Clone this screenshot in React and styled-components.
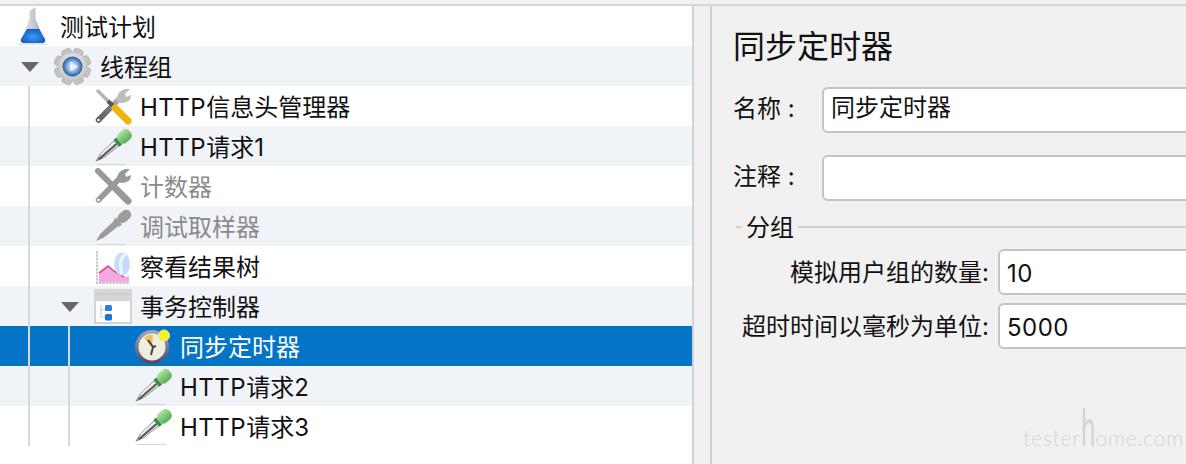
import styled, { createGlobalStyle } from "styled-components";

const GlobalStyle = createGlobalStyle`
  html, body {
    margin: 0;
    height: 100%;
    overflow: hidden;
    background: #f1f1f1;
  }
  * { box-sizing: border-box; }
`;

const FONT = `"Inter", "Noto Sans CJK SC", sans-serif`;

const Page = styled.div`
  position: relative;
  width: 1186px;
  height: 464px;
  overflow: hidden;
  display: flex;
  flex-direction: column;
  padding-top: 4px;
  background: #f1f1f1;
  font-family: ${FONT};
  color: #111;
`;

const Body = styled.div`
  flex: 1;
  display: flex;
  min-height: 0;
  border-top: 2px solid #d6d6d6;
`;

const TreePane = styled.div`
  width: 694px;
  flex: none;
  background: #fff;
  border-right: 2px solid #d2d2d2;
`;

const Splitter = styled.div`
  width: 18px;
  flex: none;
  background: #f1f1f1;
  border-right: 2px solid #cfcfcf;
`;

const Row = styled.div`
  height: 40px;
  display: flex;
  align-items: stretch;
  background: ${(p) => (p.$selected ? "#0374c6" : p.$striped ? "#f0f3f8" : "#fff")};
  color: ${(p) => (p.$selected ? "#fff" : p.$disabled ? "#8a8a8a" : "#111")};
`;

const Guide = styled.span`
  width: 40px;
  flex: none;
  &::before {
    content: "";
    display: block;
    width: 2px;
    height: 100%;
    margin-left: 28px;
    background: #d8d8d8;
  }
`;

const Toggle = styled.span`
  width: 40px;
  flex: none;
  display: flex;
  align-items: center;
  padding-left: 21px;
  &::before {
    content: "";
    display: ${(p) => (p.$open ? "block" : "none")};
    width: 0;
    height: 0;
    margin-top: 1px;
    border-left: 9px solid transparent;
    border-right: 9px solid transparent;
    border-top: 10px solid #666;
  }
`;

const IconSlot = styled.span`
  width: 60px;
  flex: none;
  padding-left: 14px;
  display: flex;
  svg {
    display: block;
    filter: blur(0.35px);
  }
`;

const Label = styled.span`
  font-size: 24px;
  line-height: 40px;
  white-space: nowrap;
  padding-top: 2px;
`;

const Latin = styled.span`
  letter-spacing: 0.5px;
`;

const Detail = styled.div`
  flex: 1;
  min-width: 0;
  padding: 19px 0 0 21px;
`;

const Title = styled.h1`
  margin: 0 0 18px;
  font-size: 32px;
  font-weight: 400;
  line-height: 44px;
  white-space: nowrap;
`;

const FieldRow = styled.div`
  display: flex;
  align-items: center;
  height: 46px;
  margin-bottom: 22px;
`;

const FieldLabel = styled.label`
  width: 89px;
  flex: none;
  padding-bottom: 8px;
  font-size: 24px;
  white-space: pre;
`;

const TextBox = styled.div`
  width: 500px;
  flex: none;
  height: 46px;
  padding-left: 7px;
  background: #fff;
  border: 2px solid #c4c4c4;
  border-radius: 6px;
  font-size: 24px;
  line-height: 38px;
  white-space: nowrap;
`;

const NumberBox = styled(TextBox)`
  line-height: 46px;
  letter-spacing: 0.5px;
`;

const Group = styled.div`
  margin-top: -11px;
  margin-left: 3px;
`;

const GroupTitle = styled.div`
  display: flex;
  align-items: center;
  gap: 4px;
  height: 30px;
  margin-bottom: 7px;
  font-size: 24px;
  &::before {
    content: "";
    width: 6px;
    height: 2px;
    background: #d2d2d2;
  }
  &::after {
    content: "";
    flex: 1;
    height: 2px;
    background: #d2d2d2;
  }
`;

const GroupText = styled.span`
  padding-bottom: 4px;
`;

const GroupField = styled.div`
  display: grid;
  grid-template-columns: 253px 1fr;
  column-gap: 9px;
  align-items: center;
  margin-bottom: 8px;
`;

const GroupLabel = styled.label`
  padding-bottom: 3px;
  font-size: 24px;
  text-align: right;
  white-space: nowrap;
`;

const Watermark = styled.div`
  position: absolute;
  right: 2px;
  bottom: 12px;
  font-family: "Lato", sans-serif;
  font-weight: 300;
  font-size: 21px;
  letter-spacing: 0.8px;
  color: #d4d4d4;
  line-height: 1;
  white-space: nowrap;
`;

const WatermarkTall = styled.span`
  display: inline-block;
  width: 15px;
  font-size: 52px;
  font-weight: 400;
  transform: scaleX(0.5);
  transform-origin: left bottom;
`;

const Flask = () => (
  <svg width="40" height="40" viewBox="0 0 40 40">
    <defs>
      <linearGradient id="flaskGlass" x1="0" y1="0" x2="1" y2="0">
        <stop offset="0" stopColor="#e4e6ea" />
        <stop offset="1" stopColor="#a9adb5" />
      </linearGradient>
      <radialGradient id="flaskLiquid" cx="0.5" cy="0.55" r="0.6">
        <stop offset="0" stopColor="#3f9cf5" />
        <stop offset="1" stopColor="#0f56bd" />
      </radialGradient>
    </defs>
    <path d="M15.5 5 L21.5 1 L21.5 13 L29 30 L9 30 L15.5 13 Z" fill="url(#flaskGlass)" />
    <path d="M13 23 L25 23 L31 33 Q32 37 28 37 L10 37 Q6 37 7 33 Z" fill="url(#flaskLiquid)" />
    <path d="M5 38 H33" stroke="#c9c9c9" strokeWidth="1" />
  </svg>
);

const GEAR_TEETH = [0, 45, 90, 135, 180, 225, 270, 315];

const Gear = () => (
  <svg width="40" height="40" viewBox="0 0 40 40">
    <defs>
      <radialGradient id="gearBody" cx="0.5" cy="0.4" r="0.6">
        <stop offset="0" stopColor="#f4f4f4" />
        <stop offset="1" stopColor="#c4c4c4" />
      </radialGradient>
      <radialGradient id="gearEye" cx="0.5" cy="0.5" r="0.5">
        <stop offset="0.4" stopColor="#a9c8ee" />
        <stop offset="1" stopColor="#24589f" />
      </radialGradient>
    </defs>
    {GEAR_TEETH.map((deg) => (
      <rect key={deg} x="13.5" y="2" width="10" height="9" rx="3" fill="#c2c2c2" stroke="#aaa" strokeWidth="0.6" transform={`rotate(${deg + 22} 18.5 20.5)`} />
    ))}
    <circle cx="18.5" cy="20.5" r="14" fill="url(#gearBody)" />
    <circle cx="18.5" cy="20.5" r="10" fill="url(#gearEye)" />
    <path d="M16 15.5 L24 20.5 L16 25.5 Z" fill="#e8f0fa" />
  </svg>
);

const Wrench = ({ $muted }) => (
  <svg width="40" height="40" viewBox="0 0 40 40">
    <defs>
      <linearGradient id="wrenchShaft" x1="0" y1="1" x2="1" y2="0">
        <stop offset="0" stopColor="#5c5c5c" />
        <stop offset="0.5" stopColor="#777" />
        <stop offset="1" stopColor="#c4c4c4" />
      </linearGradient>
    </defs>
    <path d="M4.5 34 L26 12" stroke={$muted ? "#999" : "url(#wrenchShaft)"} strokeWidth="5.5" strokeLinecap="round" />
    <path d="M23 14 Q22 6 31 3 L36 3 L31 8 L32 11 L37 9 Q37 17 27 17 Z" fill={$muted ? "#999" : "#bdbdbd"} />
    <circle cx="4.5" cy="34" r="1.3" fill="#fff" />
    <path d="M4 5 L19 20" stroke={$muted ? "#999" : "#b5b5b5"} strokeWidth={$muted ? 6 : 3.5} strokeLinecap="round" />
    <path d="M14 15 L20 21" stroke={$muted ? "#999" : "#555"} strokeWidth="4" />
    <path d="M21 22 L34 35" stroke={$muted ? "#999" : "#f0b410"} strokeWidth="7" strokeLinecap="round" />
  </svg>
);

const Dropper = ({ $muted }) => (
  <svg width="40" height="40" viewBox="0 0 40 40">
    <defs>
      <linearGradient id="dropperBulb" x1="0" y1="0" x2="0" y2="1">
        <stop offset="0" stopColor="#a9e69b" />
        <stop offset="1" stopColor="#56ac5a" />
      </linearGradient>
    </defs>
    <g transform="translate(2 35) rotate(-41)">
      <path d="M0 0 L8 -2.5 L28 -3.5 L28 3.5 L8 2.5 Z" fill={$muted ? "#9c9c9c" : "#e6e6e6"} stroke={$muted ? "none" : "#777"} strokeWidth="0.8" />
      {!$muted && <path d="M3 0.5 L27 0.5" stroke="#555" strokeWidth="2" />}
      {!$muted && <path d="M8 -1.6 L27 -2" stroke="#f4f4f4" strokeWidth="1.2" />}
      <rect x="27" y="-4.5" width="3.5" height="9" fill={$muted ? "#9c9c9c" : "#3f7f49"} />
      <rect x="30" y={$muted ? -5 : -6} width="15" height={$muted ? 10 : 12} rx="5" fill={$muted ? "#9c9c9c" : "url(#dropperBulb)"} />
    </g>
    <path d="M3 38.5 H32" stroke="#d6d6d6" strokeWidth="1" />
  </svg>
);

const ResultTree = () => (
  <svg width="40" height="40" viewBox="0 0 40 40">
    <path d="M3 5 V37 H36" fill="none" stroke="#b0b0b0" strokeWidth="1.4" strokeDasharray="2.4 1" />
    <path d="M5 36 V27 L14 20 L20 25 L30 31 L35 30 V36 Z" fill="#f6a8e2" />
    <path d="M5 27 L14 20 L20 25 L30 31" fill="none" stroke="#d8508f" strokeWidth="1.6" />
    <ellipse cx="28" cy="18" rx="8" ry="11.5" fill="#c5dcfa" />
    <path d="M31 8 Q24 14 28 28" fill="none" stroke="#eef5ff" strokeWidth="3" />
  </svg>
);

const Transaction = () => (
  <svg width="40" height="40" viewBox="0 0 40 40">
    <rect x="1" y="4" width="36" height="33" fill="#fff" stroke="#d4d4d4" strokeWidth="2" />
    <rect x="0" y="3" width="38" height="12" fill="#d6d6d6" />
    <path d="M1 8 H37" stroke="#c2c2c2" strokeWidth="1" strokeDasharray="2 1" />
    <path d="M7 19 V31 H12 M7 24 H12" fill="none" stroke="#a8a8a8" strokeWidth="1" strokeDasharray="1.5 1" />
    <rect x="11" y="19" width="7" height="6" rx="1.5" fill="#2882e6" />
    <rect x="11" y="28" width="7" height="6.5" rx="1.5" fill="#1f6fd6" />
  </svg>
);

const Timer = () => (
  <svg width="40" height="40" viewBox="0 0 40 40">
    <defs>
      <linearGradient id="timerRim" x1="0" y1="0" x2="0" y2="1">
        <stop offset="0" stopColor="#a9a5b4" />
        <stop offset="1" stopColor="#4e4a66" />
      </linearGradient>
    </defs>
    <circle cx="18" cy="21" r="17" fill="url(#timerRim)" />
    <circle cx="18" cy="21" r="13.5" fill="#efece0" />
    <path d="M18 21 L10 12 Q14 8 19 9 Z" fill="#e2c65e" />
    <path d="M14 14 L19 21 L17 29 M19 21 L22 20" fill="none" stroke="#4b463b" strokeWidth="2" />
    <circle cx="30" cy="9.5" r="5.5" fill="#f7f21f" stroke="#eeeba0" />
  </svg>
);

const rows = [
  { text: "测试计划", icon: <Flask /> },
  { text: "线程组", icon: <Gear />, open: true },
  { latin: "HTTP", text: "信息头管理器", icon: <Wrench />, guides: 1 },
  { latin: "HTTP", text: "请求1", icon: <Dropper />, guides: 1 },
  { text: "计数器", icon: <Wrench $muted />, guides: 1, disabled: true },
  { text: "调试取样器", icon: <Dropper $muted />, guides: 1, disabled: true },
  { text: "察看结果树", icon: <ResultTree />, guides: 1 },
  { text: "事务控制器", icon: <Transaction />, guides: 1, open: true },
  { text: "同步定时器", icon: <Timer />, guides: 2, selected: true },
  { latin: "HTTP", text: "请求2", icon: <Dropper />, guides: 2 },
  { latin: "HTTP", text: "请求3", icon: <Dropper />, guides: 2 },
];

const TreeRow = ({ row, index }) => (
  <Row $striped={index % 2 === 1} $selected={row.selected} $disabled={row.disabled}>
    {Array.from({ length: row.guides || 0 }, (_, i) => (
      <Guide key={i} />
    ))}
    {index > 0 && <Toggle $open={row.open} />}
    <IconSlot>{row.icon}</IconSlot>
    <Label>
      {row.latin && <Latin>{row.latin}</Latin>}
      {row.text}
    </Label>
  </Row>
);

export default function App() {
  return (
    <Page>
      <GlobalStyle />
      <Body>
        <TreePane>
          {rows.map((row, i) => (
            <TreeRow key={row.text} row={row} index={i} />
          ))}
        </TreePane>
        <Splitter />
        <Detail>
          <Title>同步定时器</Title>
          <FieldRow>
            <FieldLabel>名称 :</FieldLabel>
            <TextBox>同步定时器</TextBox>
          </FieldRow>
          <FieldRow>
            <FieldLabel>注释 :</FieldLabel>
            <TextBox />
          </FieldRow>
          <Group>
            <GroupTitle>
              <GroupText>分组</GroupText>
            </GroupTitle>
            <GroupField>
              <GroupLabel>模拟用户组的数量:</GroupLabel>
              <NumberBox>10</NumberBox>
            </GroupField>
            <GroupField>
              <GroupLabel>超时时间以毫秒为单位:</GroupLabel>
              <NumberBox>5000</NumberBox>
            </GroupField>
          </Group>
        </Detail>
      </Body>
      <Watermark>
        tester<WatermarkTall>h</WatermarkTall>ome.com
      </Watermark>
    </Page>
  );
}
